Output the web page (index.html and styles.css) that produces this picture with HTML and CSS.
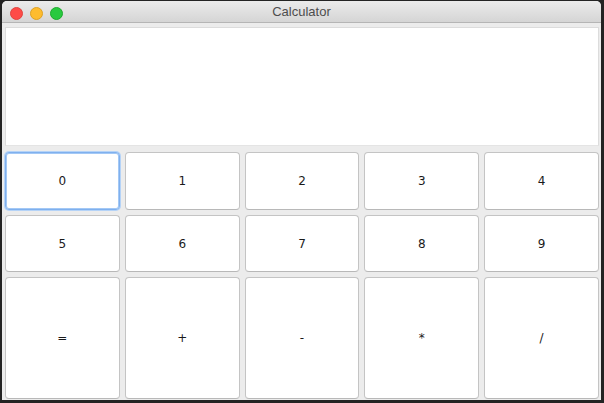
FILE: index.html
```html
<!DOCTYPE html>
<html>
<head>
<meta charset="utf-8">
<link rel="stylesheet" href="styles.css">
</head>
<body>
<div class="window">
  <div class="titlebar">
    <div class="lights">
      <span class="light red"></span>
      <span class="light yellow"></span>
      <span class="light green"></span>
    </div>
    <div class="title">Calculator</div>
  </div>
  <div class="content">
    <div class="display"></div>
    <div class="keys">
      <button class="key focused">0</button>
      <button class="key">1</button>
      <button class="key">2</button>
      <button class="key">3</button>
      <button class="key">4</button>
      <button class="key">5</button>
      <button class="key">6</button>
      <button class="key">7</button>
      <button class="key">8</button>
      <button class="key">9</button>
      <button class="key">=</button>
      <button class="key">+</button>
      <button class="key">-</button>
      <button class="key">*</button>
      <button class="key">/</button>
    </div>
  </div>
</div>
</body>
</html>
```
FILE: styles.css
```css
html, body {
  margin: 0;
  padding: 0;
}
body {
  width: 604px;
  height: 403px;
  background: #232323;
  overflow: hidden;
  font-family: "DejaVu Sans", "Liberation Sans", sans-serif;
}
.window {
  margin: 1px 3px 0 2px;
  height: 399px;
  display: flex;
  flex-direction: column;
  border-radius: 5px 5px 0 0;
  overflow: hidden;
  background: #ececec;
}
.titlebar {
  height: 21px;
  flex: none;
  position: relative;
  background: linear-gradient(#ebebeb, #d5d5d5);
  border-bottom: 1px solid #b5b5b5;
  display: flex;
  align-items: center;
  justify-content: center;
}
.lights {
  position: absolute;
  left: 8px;
  top: 6px;
  display: flex;
  gap: 7px;
}
.light {
  width: 13px;
  height: 13px;
  border-radius: 50%;
  box-sizing: border-box;
}
.red { background: #fe4b47; border: 1px solid #e0443e; }
.yellow { background: #febc2e; border: 1px solid #dea123; }
.green { background: #28c93f; border: 1px solid #1daa2c; }
.title {
  font-size: 13px;
  color: #4d4d4d;
  font-family: "Liberation Sans", "DejaVu Sans", sans-serif;
}
.content {
  flex: 1;
  display: flex;
  flex-direction: column;
  padding: 4px 2px 1px 3px;
  gap: 6px;
  background: #ececec;
}
.display {
  height: 117px;
  flex: none;
  background: #fff;
  border: 1px solid #dcdcdc;
  border-bottom-color: #e4e4e4;
}
.keys {
  flex: 1;
  display: grid;
  grid-template-columns: repeat(5, 1fr);
  grid-template-rows: 58px 57px 1fr;
  gap: 5px;
}
.key {
  margin: 0;
  padding: 0;
  background: #fff;
  border: 1px solid #c4c4c4;
  border-bottom-color: #b8b8b8;
  border-radius: 4px;
  font-family: "DejaVu Sans", sans-serif;
  font-size: 12px;
  color: #1a1a1a;
}
.key.focused {
  border: 1px solid #7fb0ee;
  box-shadow: 0 0 0 1px #a3c8f5 inset, 0 0 0 1px #b5d3f7;
}
```
